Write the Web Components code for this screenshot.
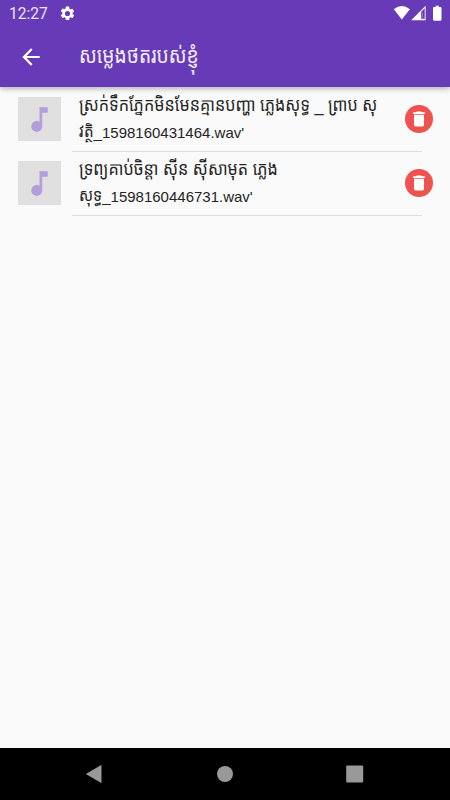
<!DOCTYPE html>
<html lang="km">
<head>
<meta charset="utf-8">
<title>សម្លេងថតរបស់ខ្ញុំ</title>
<style>
  body {
    margin: 0;
    font-family: "Liberation Sans", "Khmer OS", "Noto Sans Khmer", sans-serif;
  }
</style>
</head>
<body>
<recordings-app></recordings-app>
<script>
class StatusBar extends HTMLElement {
  constructor() {
    super();
    this.attachShadow({ mode: 'open' });
    this.shadowRoot.innerHTML = `
      <style>
        :host {
          display: flex;
          align-items: center;
          height: 26px;
          padding: 0 8px 0 9px;
          box-sizing: border-box;
          color: #ece6f6;
          font: 15.6px/26px Roboto, sans-serif;
        }
        svg { display: block; fill: #fff; }
        .time { width: 50px; padding-top: 2px; box-sizing: border-box; }
        .icons { display: flex; margin-left: auto; }
      </style>
      <span class="time"><slot></slot></span>
      <svg width="17" height="17" viewBox="0 0 24 24"><path d="M19.14 12.94c.04-.3.06-.61.06-.94 0-.32-.02-.64-.07-.94l2.03-1.58a.49.49 0 0 0 .12-.61l-1.92-3.32a.49.49 0 0 0-.59-.22l-2.39.96a7 7 0 0 0-1.62-.94l-.36-2.54A.48.48 0 0 0 13.92 2h-3.84a.48.48 0 0 0-.48.41l-.36 2.54c-.59.24-1.13.57-1.62.94l-2.39-.96a.49.49 0 0 0-.59.22L2.72 8.47a.49.49 0 0 0 .12.61l2.03 1.58c-.05.3-.07.62-.07.94s.02.64.07.94l-2.03 1.58a.49.49 0 0 0-.12.61l1.92 3.32c.12.22.37.29.59.22l2.39-.96c.5.38 1.03.7 1.62.94l.36 2.54c.05.24.24.41.48.41h3.84c.24 0 .44-.17.47-.41l.36-2.54c.59-.24 1.13-.56 1.62-.94l2.39.96c.22.08.47 0 .59-.22l1.92-3.32a.49.49 0 0 0-.12-.61zM12 15.6a3.6 3.6 0 1 1 0-7.2 3.6 3.6 0 0 1 0 7.2z"/></svg>
      <div class="icons">
        <svg width="49" height="16" viewBox="0 0 49 16">
          <path d="M.8 4.3Q8.8-2.3 16.9 4.3L8.8 14.6z"/>
          <path fill-rule="evenodd" d="M18.2 15.2 32.6.8v14.4zM28 7v6.7h3.7V3.3z"/>
          <path d="M28.6 7.4h.9v5.7h-.9z" opacity=".5"/>
          <path d="M42.6 .7h3.3v1.3h1.5q1.1 0 1.1 1.1v11.5q0 1.1-1.1 1.1h-6.3q-1.1 0-1.1-1.1V3.1q0-1.1 1.1-1.1h1.5z"/>
        </svg>
      </div>
    `;
  }
}

class AppBar extends HTMLElement {
  constructor() {
    super();
    this.attachShadow({ mode: 'open' });
    this.shadowRoot.innerHTML = `
      <style>
        :host {
          display: block;
          position: relative;
          height: 87px;
          background: #673ab7;
          box-shadow: 0 2px 5px rgba(0, 0, 0, .28);
        }
        .toolbar {
          display: flex;
          align-items: center;
          height: 61px;
          padding-left: 18px;
        }
        svg { display: block; width: 26px; height: 26px; fill: #fff; }
        h1 {
          margin: 0 0 0 35px;
          font-size: 19.2px;
          font-weight: 400;
          line-height: 40px;
          color: #f3eefa;
          white-space: nowrap;
          transform: translateY(-1px) scaleY(1.15);
        }
      </style>
      <status-bar>12:27</status-bar>
      <div class="toolbar">
        <svg viewBox="0 0 24 24"><path d="M20 11H7.83l5.59-5.59L12 4l-8 8 8 8 1.41-1.41L7.83 13H20v-2z"/></svg>
        <h1><slot></slot></h1>
      </div>
    `;
  }
}

class RecordingTile extends HTMLElement {
  constructor() {
    super();
    this.attachShadow({ mode: 'open' });
    this.shadowRoot.innerHTML = `
      <style>
        :host {
          display: grid;
          grid-template-columns: 43.5px 1fr 28px;
          column-gap: 18px;
          align-items: center;
          height: 64px;
          padding: 0 17px 0 17.5px;
          box-sizing: border-box;
        }
        .thumb {
          display: grid;
          place-items: center;
          height: 43.5px;
          background: #e0e0e0;
        }
        .thumb svg { width: 33px; height: 33px; fill: #b39ddb; }
        .name {
          font-size: 15px;
          line-height: 28px;
          color: #242424;
          white-space: nowrap;
        }
        ::slotted(span) {
          display: inline-block;
          height: 28px;
          font-size: 16.2px;
          vertical-align: top;
          transform: translateY(-1px) scaleY(1.12);
        }
        ::slotted(span:last-of-type) {
          font-size: 15.2px;
          transform: translateY(-1.5px) scaleY(1.12);
        }
        .delete {
          display: grid;
          place-items: center;
          height: 28px;
          border-radius: 50%;
          background: #ef5350;
        }
        .delete svg { width: 20px; height: 20px; fill: #fff; }
      </style>
      <div class="thumb"><svg viewBox="0 0 24 24"><path d="M12 3v10.55A4 4 0 1 0 14 17V7h4V3h-6z"/></svg></div>
      <div class="name"><slot></slot></div>
      <div class="delete"><svg viewBox="0 0 24 24"><path d="M6 19c0 1.1.9 2 2 2h8c1.1 0 2-.9 2-2V7H6v12zM19 4h-3.5l-1-1h-5l-1 1H5v2h14V4z"/></svg></div>
    `;
  }
}

class NavBar extends HTMLElement {
  constructor() {
    super();
    this.attachShadow({ mode: 'open' });
    this.shadowRoot.innerHTML = `
      <style>
        :host {
          display: grid;
          grid-template-columns: repeat(3, 130px);
          justify-content: center;
          place-items: center;
          height: 52px;
          background: #000;
        }
        svg { display: block; width: 20px; height: 20px; fill: #999; }
      </style>
      <svg viewBox="0 0 20 20"><path d="M.8 10 15.8 1.2q.7-.3.7.5v16.6q0 .8-.7.5z"/></svg>
      <svg viewBox="0 0 20 20"><circle cx="10" cy="10" r="8"/></svg>
      <svg viewBox="0 0 20 20"><rect x="1.2" y="1.4" width="17" height="17" rx="1"/></svg>
    `;
  }
}

class RecordingsApp extends HTMLElement {
  constructor() {
    super();
    this.attachShadow({ mode: 'open' });
    this.shadowRoot.innerHTML = `
      <style>
        :host {
          display: flex;
          flex-direction: column;
          height: 100vh;
          background: #fafafa;
          overflow: hidden;
        }
        main { flex: 1; }
        hr {
          height: 1px;
          margin: 0 28px -1px 72px;
          border: 0;
          background: #dedede;
        }
      </style>
      <app-bar>សម្លេងថតរបស់ខ្ញុំ</app-bar>
      <main>
        <recording-tile><span>ស្រក់ទឹកភ្នែកមិនមែនគ្មានបញ្ហា ភ្លេងសុទ្ធ _ ព្រាប សុ</span><br><span>វត្ថិ</span>_1598160431464.wav'</recording-tile>
        <hr>
        <recording-tile><span>ទ្រព្យគាប់ចិន្តា ស៊ីន ស៊ីសាមុត ភ្លេង</span><br><span>សុទ្ធ</span>_1598160446731.wav'</recording-tile>
        <hr>
      </main>
      <nav-bar></nav-bar>
    `;
  }
}

customElements.define('status-bar', StatusBar);
customElements.define('app-bar', AppBar);
customElements.define('recording-tile', RecordingTile);
customElements.define('nav-bar', NavBar);
customElements.define('recordings-app', RecordingsApp);
</script>
</body>
</html>
